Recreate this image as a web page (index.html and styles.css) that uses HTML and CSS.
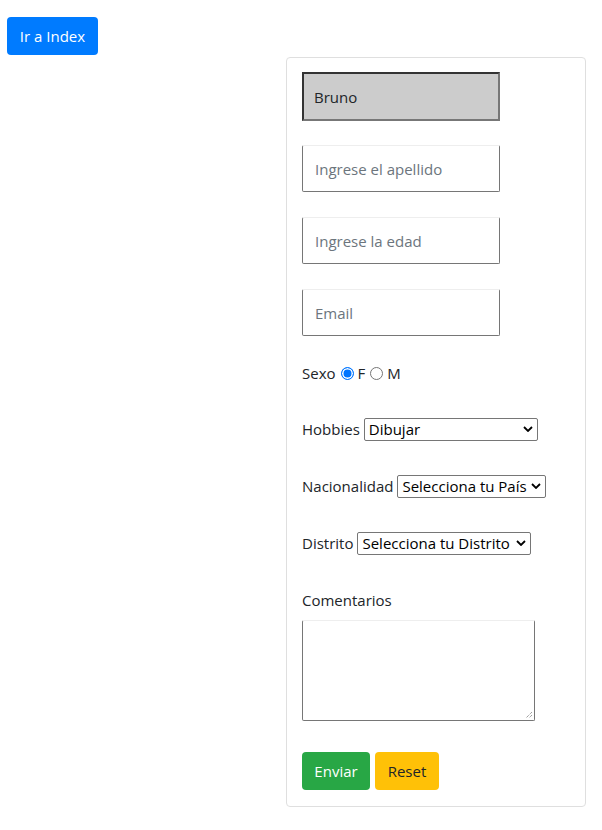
FILE: index.html
```html
<!DOCTYPE html>
<html lang="es">
<head>
<meta charset="utf-8">
<title>Formulario</title>
<link rel="stylesheet" href="styles.css">
</head>
<body>
<div class="top">
  <a class="btn btn-primary" href="#">Ir a Index</a>
</div>
<div class="wrap">
  <form class="card">
    <input class="field field-filled" type="text" value="Bruno">
    <input class="field" type="text" placeholder="Ingrese el apellido">
    <input class="field" type="text" placeholder="Ingrese la edad">
    <input class="field" type="text" placeholder="Email">
    <div class="row row-sexo">
      <span>Sexo</span>
      <span class="radio radio-on"></span><span>F</span>
      <span class="radio"></span><span>M</span>
    </div>
    <div class="row">
      <span>Hobbies</span>
      <span class="select sel-hobbies">Dibujar<svg class="chev" viewBox="0 0 10 6"><path d="M1 1 L5 5 L9 1" fill="none" stroke="#000" stroke-width="1.8"/></svg></span>
    </div>
    <div class="row">
      <span>Nacionalidad</span>
      <span class="select sel-nac">Selecciona tu País<svg class="chev" viewBox="0 0 10 6"><path d="M1 1 L5 5 L9 1" fill="none" stroke="#000" stroke-width="1.8"/></svg></span>
    </div>
    <div class="row">
      <span>Distrito</span>
      <span class="select sel-dist">Selecciona tu Distrito<svg class="chev" viewBox="0 0 10 6"><path d="M1 1 L5 5 L9 1" fill="none" stroke="#000" stroke-width="1.8"/></svg></span>
    </div>
    <div class="row row-label">Comentarios</div>
    <div class="textarea">
      <svg class="grip" viewBox="0 0 8 8"><path d="M7 1 L1 7 M7 4 L4 7" stroke="#777" stroke-width="1" stroke-dasharray="1 1"/></svg>
    </div>
    <div class="actions">
      <span class="btn btn-success">Enviar</span>
      <span class="btn btn-warning">Reset</span>
    </div>
  </form>
</div>
</body>
</html>
```
FILE: styles.css
```css
* { box-sizing: border-box; }
html, body { margin: 0; padding: 0; background: #fff; }
body {
  font-family: "Open Sans", "Noto Sans", sans-serif;
  font-size: 15px;
  color: #212529;
  line-height: 24px;
}
.top { padding: 17px 0 0 7px; height: 57px; }
.btn {
  display: inline-flex;
  align-items: center;
  justify-content: center;
  height: 38px;
  padding: 0;
  border-radius: 4px;
  border: 1px solid transparent;
  text-decoration: none;
  font-size: 15px;
  white-space: nowrap;
}
.btn-primary { background: #007bff; color: #fff; width: 91px; }
.btn-success { background: #28a745; color: #fff; width: 68px; }
.btn-warning { background: #ffc107; color: #212529; width: 64px; }
.wrap { padding-left: 286px; }
.card {
  width: 300px;
  border: 1px solid #dfdfdf;
  border-radius: 4px;
  padding: 14px 15px 16px;
  display: flex;
  flex-direction: column;
  align-items: flex-start;
}
.field {
  width: 198px;
  height: 47px;
  margin: 0 0 25px;
  border: 1px solid #767676;
  border-top-color: #eeeeee;
  border-radius: 2px;
  padding: 0 12px;
  font: inherit;
  color: #212529;
  background: #fff;
  outline: none;
}
.field::placeholder { color: #6c757d; }
.field-filled {
  height: 49px;
  margin-bottom: 24px;
  background: #cccccc;
  border: 2px solid #777;
  border-top-color: #333;
  border-left-color: #333;
  border-radius: 0;
  padding: 0 10px;
}
.row {
  display: flex;
  align-items: center;
  gap: 4px;
  height: 24px;
  margin-bottom: 33px;
  white-space: nowrap;
}
.row-sexo { gap: 4px; margin-bottom: 32px; }
.radio {
  width: 13px;
  height: 13px;
  border-radius: 50%;
  border: 1px solid #767676;
  margin-left: 1px;
  background: #fff;
}
.radio-on {
  border: 1.5px solid #0075ff;
  background: #0075ff;
  box-shadow: inset 0 0 0 1.5px #fff;
}
.select {
  display: inline-flex;
  align-items: center;
  justify-content: space-between;
  height: 23px;
  border: 1px solid #767676;
  border-radius: 2px;
  padding: 0 4px;
  font-size: 15px;
  color: #000;
  background: #fff;
}
.chev { width: 10px; height: 6px; margin-left: 3px; flex: none; }
.sel-hobbies { width: 174px; }
.sel-nac { width: 149px; }
.sel-dist { width: 174px; }
.row-label { margin-bottom: 8px; }
.textarea {
  position: relative;
  width: 233px;
  height: 101px;
  border: 1px solid #767676;
  border-top-color: #eeeeee;
  border-radius: 2px;
  margin-bottom: 31px;
}
.grip {
  position: absolute;
  right: 1px;
  bottom: 1px;
  width: 8px;
  height: 8px;
}
.actions { display: flex; gap: 5px; }
```
